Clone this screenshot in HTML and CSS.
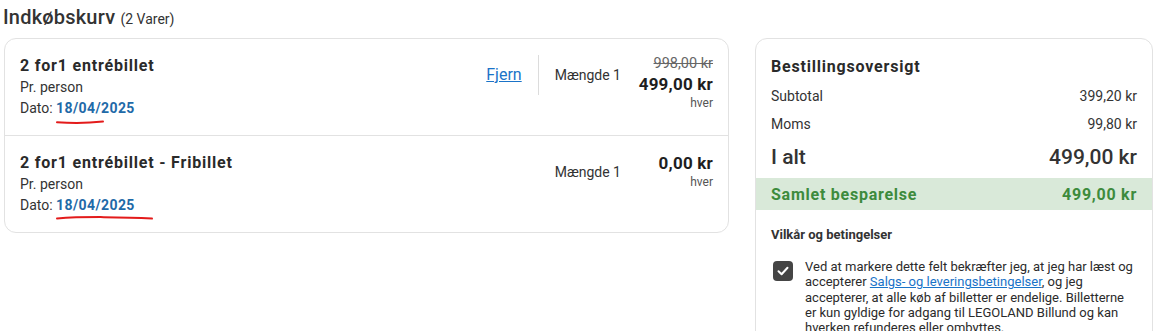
FILE: index.html
```html
<!DOCTYPE html>
<html lang="da">

<head>
    <meta charset="UTF-8">
    <meta name="viewport" content="width=device-width, initial-scale=1.0">
    <title>Indkøbskurv</title>
    <link rel="stylesheet" href="styles.css">
</head>

<body>
    <div class="page">
        <h1 class="cart-title">Indkøbskurv <span class="cart-count">(2 Varer)</span></h1>

        <div class="cart-layout">
            <div class="cart-items">
                <div class="cart-item">
                    <div class="item-info">
                        <h2 class="item-name">2 for1 entrébillet</h2>
                        <p class="item-sub">Pr. person</p>
                        <p class="item-sub">Dato: <span class="item-date">18/04/2025
                            <svg class="scribble" width="50" height="6" viewBox="0 0 50 6"><path d="M1 3.2 C 15 4.2, 33 4, 47 2.6" /></svg>
                        </span></p>
                    </div>
                    <div class="item-actions">
                        <div class="item-ctrl">
                            <a href="#" class="remove-link">Fjern</a>
                            <span class="qty qty-split">Mængde 1</span>
                        </div>
                        <div class="item-price">
                            <span class="price-old">998,00 kr</span>
                            <span class="price-now">499,00 kr</span>
                            <span class="price-unit">hver</span>
                        </div>
                    </div>
                </div>
                <div class="cart-item">
                    <div class="item-info">
                        <h2 class="item-name">2 for1 entrébillet - Fribillet</h2>
                        <p class="item-sub">Pr. person</p>
                        <p class="item-sub">Dato: <span class="item-date">18/04/2025
                            <svg class="scribble scribble-long" width="100" height="6" viewBox="0 0 100 6"><path d="M1 3.5 C 25 1.5, 70 1.8, 96 3.6" /></svg>
                        </span></p>
                    </div>
                    <div class="item-actions">
                        <div class="item-ctrl">
                            <span class="qty">Mængde 1</span>
                        </div>
                        <div class="item-price">
                            <span class="price-now">0,00 kr</span>
                            <span class="price-unit">hver</span>
                        </div>
                    </div>
                </div>
            </div>

            <div class="summary">
                <h3 class="summary-title">Bestillingsoversigt</h3>
                <div class="summary-row"><span>Subtotal</span><span>399,20 kr</span></div>
                <div class="summary-row"><span>Moms</span><span>99,80 kr</span></div>
                <div class="summary-row summary-total"><span>I alt</span><span>499,00 kr</span></div>
                <div class="summary-row summary-saving"><span>Samlet besparelse</span><span>499,00 kr</span></div>

                <div class="terms">
                    <h4 class="terms-title">Vilkår og betingelser</h4>
                    <label class="terms-check">
                        <span class="checkbox">
                            <svg width="14" height="14" viewBox="0 0 14 14"><path d="M2.5 7.3 L5.6 10.2 L11.5 3.8" /></svg>
                        </span>
                        <span class="terms-text">Ved at markere dette felt bekræfter jeg, at jeg har læst og accepterer <a href="#">Salgs- og leveringsbetingelser</a>, og jeg accepterer, at alle køb af billetter er endelige. Billetterne er kun gyldige for adgang til LEGOLAND Billund og kan hverken refunderes eller ombyttes.</span>
                    </label>
                </div>
            </div>
        </div>
    </div>
</body>

</html>
```

FILE: styles.css
```css
body {
    margin: 0;
    font-family: Roboto, "Liberation Sans", Arial, sans-serif;
    color: #2b2b2b;
    background-color: #fff;
}

p,
h1,
h2,
h3,
h4 {
    margin: 0;
}

.page {
    padding: 4px 9px 0 4px;
}

.cart-title {
    font-size: 20px;
    font-weight: 500;
    line-height: 26px;
    letter-spacing: 0.2px;
    margin-left: -1px;
    height: 34px;
    color: #333;
}

.cart-count {
    font-size: 14px;
    font-weight: 400;
    letter-spacing: 0;
}

.cart-layout {
    display: flex;
    align-items: flex-start;
    gap: 26px;
}

.cart-items {
    width: 725px;
    border: 1px solid #e2e2e2;
    border-radius: 12px;
    box-sizing: border-box;
}

.cart-item {
    display: flex;
    justify-content: space-between;
    padding: 16px 15px 17px 15px;
}

.cart-item + .cart-item {
    border-top: 1px solid #e2e2e2;
}

.item-name {
    font-size: 16px;
    font-weight: 700;
    line-height: 22px;
    letter-spacing: 0.8px;
    color: #2a2a2a;
}

.item-sub {
    font-size: 14px;
    line-height: 20px;
    color: #333;
}

.item-sub + .item-sub {
    margin-top: 1px;
}

.item-date {
    position: relative;
    color: #1f6aa8;
    font-weight: 700;
    letter-spacing: 0.4px;
}

.scribble {
    position: absolute;
    left: 0;
    top: 19px;
    overflow: visible;
}

.scribble-long {
    top: 18px;
}

.scribble path {
    fill: none;
    stroke: #e31b1b;
    stroke-width: 2;
    stroke-linecap: round;
}

.item-actions {
    display: flex;
    align-items: flex-start;
}

.item-ctrl {
    display: flex;
    align-items: center;
    height: 40px;
}

.remove-link {
    font-size: 16px;
    color: #1a73c8;
    text-decoration: underline;
    padding-right: 16px;
    line-height: 40px;
    border-right: 1px solid #dcdcdc;
}

.qty {
    font-size: 14px;
    color: #333;
}

.qty-split {
    padding-left: 16px;
}

.item-price {
    width: 76px;
    margin-left: 16px;
    display: flex;
    flex-direction: column;
    align-items: flex-end;
}

.price-old {
    font-size: 14.5px;
    line-height: 18px;
    color: #666;
    text-decoration: line-through;
}

.price-now {
    font-size: 17px;
    font-weight: 700;
    line-height: 22px;
    color: #1e1e1e;
    letter-spacing: 0.2px;
}

.price-unit {
    font-size: 12px;
    line-height: 16px;
    color: #555;
}

.summary {
    width: 398px;
    height: 320px;
    border: 1px solid #e2e2e2;
    border-radius: 12px;
    box-sizing: border-box;
    overflow: hidden;
}

.summary-title {
    font-size: 16px;
    font-weight: 700;
    line-height: 24px;
    letter-spacing: 0.8px;
    padding: 16px 15px 3px 15px;
    color: #2a2a2a;
}

.summary-row {
    display: flex;
    justify-content: space-between;
    align-items: center;
    font-size: 14px;
    height: 28px;
    padding: 0 15px;
    color: #333;
}

.summary-total {
    font-size: 21px;
    font-weight: 500;
    height: 38px;
    margin-bottom: 2px;
}

.summary-saving {
    background-color: #d9e9d9;
    color: #3d8b3d;
    font-size: 16px;
    font-weight: 700;
    letter-spacing: 0.75px;
    height: 32px;
}

.terms {
    padding: 16px 15px 0 15px;
}

.terms-title {
    font-size: 13px;
    font-weight: 700;
    line-height: 18px;
    color: #333;
}

.terms-check {
    display: flex;
    gap: 12px;
    margin-top: 17px;
    padding-left: 2px;
}

.checkbox {
    flex: none;
    width: 20px;
    height: 20px;
    border-radius: 4px;
    background-color: #454545;
    display: flex;
    align-items: center;
    justify-content: center;
}

.checkbox path {
    fill: none;
    stroke: #fff;
    stroke-width: 2;
    stroke-linecap: round;
    stroke-linejoin: round;
}

.terms-text {
    font-size: 13px;
    line-height: 15.3px;
    color: #2b2b2b;
    margin-top: -2px;
}

.terms-text a {
    color: #1a73c8;
    text-decoration: underline;
}
```
